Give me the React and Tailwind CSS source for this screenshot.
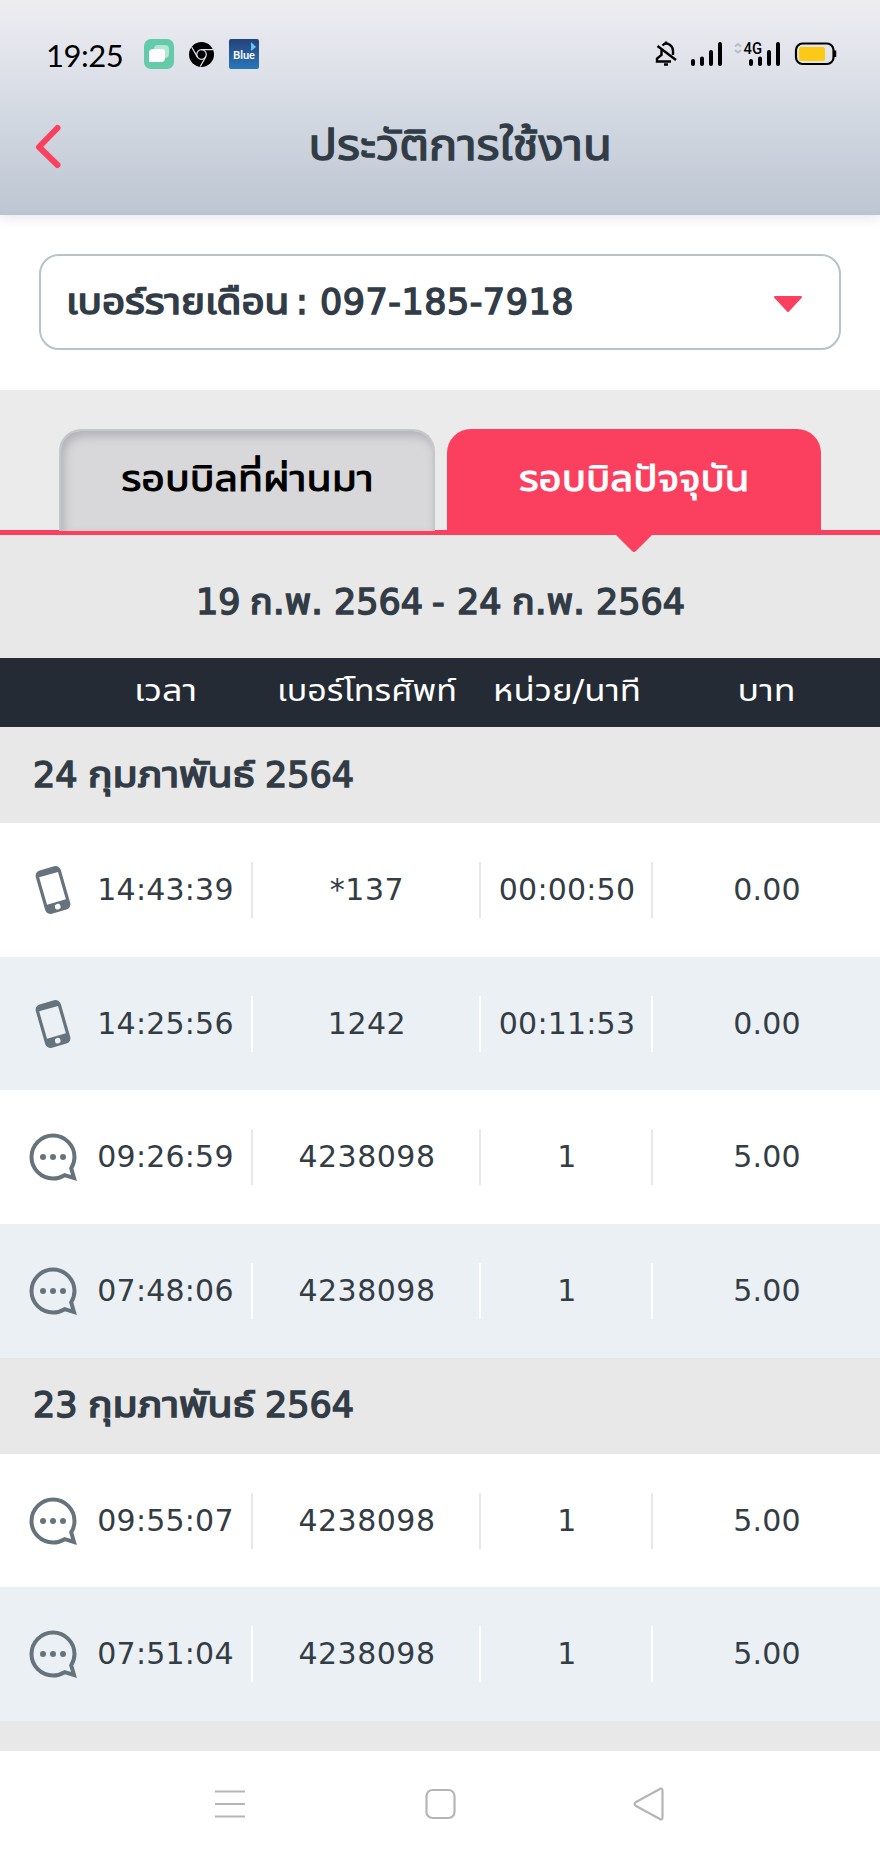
import React, { useState } from "react";

const groups = [
  {
    day: "24",
    rows: [
      { type: "call", time: "14:43:39", number: "*137", units: "00:00:50", baht: "0.00" },
      { type: "call", time: "14:25:56", number: "1242", units: "00:11:53", baht: "0.00" },
      { type: "sms", time: "09:26:59", number: "4238098", units: "1", baht: "5.00" },
      { type: "sms", time: "07:48:06", number: "4238098", units: "1", baht: "5.00" },
    ],
  },
  {
    day: "23",
    rows: [
      { type: "sms", time: "09:55:07", number: "4238098", units: "1", baht: "5.00" },
      { type: "sms", time: "07:51:04", number: "4238098", units: "1", baht: "5.00" },
    ],
  },
  { day: "22", rows: [] },
];

function PhoneIcon({ shaded }) {
  const hole = shaded ? "#ebf0f5" : "white";
  return (
    <svg width="38" height="50" viewBox="0 0 38 50">
      <g transform="rotate(-16 19 25)">
        <rect x="6" y="2.5" width="26" height="45" rx="5.5" fill="#66737d" />
        <rect x="9.2" y="9" width="19.6" height="28.5" fill={hole} />
        <rect x="16.2" y="39.6" width="5.6" height="5.4" rx="2.2" fill={hole} />
      </g>
    </svg>
  );
}

function ChatIcon() {
  return (
    <svg width="48" height="48" viewBox="0 0 48 48" fill="none">
      <path
        d="M35.6 42.2C32.2 44.3 28.1 45.5 24 45.5A21.5 21.5 0 1 1 45.5 24C45.5 28.2 44.3 32 42.2 35.3L45 45Z"
        stroke="#66737d"
        strokeWidth="4"
      />
      <circle cx="14" cy="24" r="3" fill="#66737d" />
      <circle cx="24" cy="24" r="3" fill="#66737d" />
      <circle cx="34" cy="24" r="3" fill="#66737d" />
    </svg>
  );
}

function StatusBar() {
  return (
    <div className="flex h-[108px] items-center justify-between pl-[46px] pr-[43px] text-black">
      <div className="flex items-center">
        <span className="w-[98px] pt-[2px] font-['Lato','Liberation_Sans',sans-serif] text-[31px] leading-none tracking-[-0.5px]">19:25</span>
        <svg width="30" height="30" viewBox="0 0 30 30">
          <rect width="30" height="30" rx="7" fill="#63cba9" />
          <rect x="10" y="6" width="15" height="13" rx="4" fill="#b5e6d5" />
          <path d="M9 10h9q3 0 3 3v6q0 4-4 4H5V14q0-4 4-4z" fill="white" />
        </svg>
        <svg className="ml-[15px]" width="25" height="25" viewBox="0 0 24 24">
          <circle cx="12" cy="12" r="12" fill="black" />
          <g fill="none" stroke="#dfe1e9" strokeWidth="1.2">
            <circle cx="12" cy="12" r="4.6" />
            <path d="M12 7.4H23M8 14.3L2.5 4.8M16 14.3L10.8 23.5" />
          </g>
        </svg>
        <div className="relative ml-[15px] flex h-[30px] w-[30px] items-center justify-center rounded-[2px] bg-gradient-to-b from-[#24437c] to-[#2877b9]">
          <span className="font-['Lato',sans-serif] text-[11px] font-bold leading-none text-white">Blue</span>
          <svg className="absolute right-[3px] top-[3px]" width="5" height="9" viewBox="0 0 5 9">
            <path d="M0 0L5 5L0 9Z" fill="#62c9ee" />
          </svg>
        </div>
      </div>

      <svg width="182" height="28" viewBox="655 40 182 28" fill="none">
        {/* muted bell */}
        <g stroke="black" strokeWidth="2.4">
          <path d="M657.5 46L676 60M661.5 50V55L657 58.5V61.5H671M662.5 45.5Q666 42 670 45Q673 47 673 51V55" />
          <path d="M666 44V41.5M664 64.5H668" />
        </g>
        <g stroke="black" strokeWidth="4" strokeLinecap="round">
          <path d="M693 61V64M702 58.5V64M711 52V64M720 44V64" />
          <path d="M751 61V64M760 58.5V64M769 52V64M778 44V64" />
        </g>
        <path d="M735 46.5L738 44L741 46.5M735 50L738 52.5L741 50" stroke="#b9bbc2" strokeWidth="2" />
        <text x="743.5" y="53.5" fontSize="16" fontWeight="500" fill="black" fontFamily="Roboto" textLength="18.5" lengthAdjust="spacingAndGlyphs">4G</text>
        <rect x="796" y="43.5" width="37.5" height="20.5" rx="6.5" stroke="black" strokeWidth="2.2" />
        <rect x="799" y="47" width="26" height="14" rx="2" fill="#fdc914" />
        <path d="M835 50.5V57" stroke="black" strokeWidth="2.5" />
      </svg>
    </div>
  );
}

function GroupTitle({ day }) {
  return (
    <h2 className="flex h-[96px] items-center whitespace-nowrap bg-[#e8e8e8] pl-[33px] text-[35px] [-webkit-text-stroke:1.5px]">
      <span className="w-[55px]">{day}</span>
      <span className="w-[177px]">
        <span className="inline-block origin-left scale-x-[1.17]">กุมภาพันธ์</span>
      </span>
      <span>2564</span>
    </h2>
  );
}

function Row({ row, shaded }) {
  const cell = shaded
    ? "flex h-[56px] items-center justify-center border-r-2 border-white pl-[2px]"
    : "flex h-[56px] items-center justify-center border-r-2 border-[#e8e8e8] pl-[2px]";
  return (
    <div className={`grid h-[133.7px] grid-cols-[78px_175px_228px_172px_227px] items-center text-[30px] tracking-[0.2px] text-[#343c44] ${shaded ? "bg-[#ebf0f5]" : "bg-white"}`}>
      <div className="flex justify-center pl-[28px]">
        <div className="flex w-[50px] shrink-0 justify-center">
          {row.type === "call" ? <PhoneIcon shaded={shaded} /> : <ChatIcon />}
        </div>
      </div>
      <div className={cell}>{row.time}</div>
      <div className={cell}>
        <span className="tracking-[0.5px]">{row.number}</span>
      </div>
      <div className={cell}>{row.units}</div>
      <div className="pl-[1px] text-center">{row.baht}</div>
    </div>
  );
}

export default function App() {
  const [tab, setTab] = useState("current");

  return (
    <div className="flex h-[1858px] w-[880px] flex-col overflow-hidden bg-white font-['DejaVu_Sans','Noto_Sans_Thai','Noto_Sans',sans-serif] leading-none text-[#323c46]">
      <header className="z-10 h-[215px] shrink-0 bg-[linear-gradient(#ededf0_0%,#e5e6ed_20%,#cfd6df_60%,#bfc7d4_97%,#b9c4ce_100%)] shadow-[0_2px_12px_rgba(190,190,215,0.45)]">
        <StatusBar />
        <div className="grid h-[76px] grid-cols-[100px_1fr_60px] items-center">
          <button className="pl-[35px] pt-[2px]">
            <svg width="28" height="46" viewBox="0 0 28 46" fill="none">
              <path d="M22.5 4L4 23L22.5 41" stroke="#fb3f5f" strokeWidth="6" strokeLinecap="round" strokeLinejoin="round" />
            </svg>
          </button>
          <h1 className="text-center text-[42px] [-webkit-text-stroke:1.3px]">
            <span className="inline-block scale-x-[1.122]">ประวัติการใช้งาน</span>
          </h1>
        </div>
      </header>

      <section className="h-[175px] shrink-0 px-[39px] pt-[39px]">
        <button className="flex h-[96px] w-full items-center justify-between rounded-[20px] border-2 border-[#b9c1c9] pl-[25px] pr-[36px] text-[35px] [-webkit-text-stroke:1.5px]">
          <span className="flex whitespace-nowrap">
            <span className="w-[228px] text-left">
              <span className="inline-block origin-left scale-x-[1.155]">เบอร์รายเดือน</span>
            </span>
            <span className="w-[26px] text-left pl-[2px]">:</span>
            <span className="tracking-[0.5px]">097-185-7918</span>
          </span>
          <svg className="mt-[4px]" width="30" height="17" viewBox="0 0 30 17">
            <path d="M2 1H28L15 15Z" fill="#fb3f5f" stroke="#fb3f5f" strokeWidth="2" strokeLinejoin="round" />
          </svg>
        </button>
      </section>

      <section className="h-[268px] shrink-0 bg-[#e8e8e8]">
        <div className="flex h-[145px] gap-[12px] border-b-[5px] border-[#fb3f5f] bg-[#ebebeb] pl-[59px] pt-[39px]">
          <button
            onClick={() => setTab("past")}
            className="h-[102px] w-[376px] rounded-t-[22px] border-2 border-b-0 border-[#c4c8cb] bg-[#d8d8da] pb-[4px] text-[35px] text-black shadow-[inset_3px_5px_10px_rgba(120,120,130,0.4)] [-webkit-text-stroke:1px]"
          >
            <span className="inline-block scale-x-[1.175]">รอบบิลที่ผ่านมา</span>
          </button>
          <button
            onClick={() => setTab("current")}
            aria-pressed={tab === "current"}
            className="relative h-[102px] w-[374px] rounded-t-[24px] bg-[#fb3f5f] pb-[2px] text-[35px] text-white [-webkit-text-stroke:1px]"
          >
            <span className="inline-block scale-x-[1.15]">รอบบิลปัจจุบัน</span>
            <svg className="absolute left-[168px] top-[105px]" width="38" height="20" viewBox="0 0 38 20">
              <path d="M0 0H38L21 17Q19 19 17 17Z" fill="#fb3f5f" />
            </svg>
          </button>
        </div>
        <div className="flex h-[123px] items-center whitespace-nowrap pl-[196px] pt-[12px] text-[35px] [-webkit-text-stroke:1.5px]">
          <span className="w-[54px]">19</span>
          <span className="w-[84px]">
            <span className="inline-block origin-left scale-x-[1.08]">ก.พ.</span>
          </span>
          <span className="w-[98px]">2564</span>
          <span className="w-[25px]">-</span>
          <span className="w-[55px]">24</span>
          <span className="w-[84px]">
            <span className="inline-block origin-left scale-x-[1.08]">ก.พ.</span>
          </span>
          <span>2564</span>
        </div>
      </section>

      <div className="grid h-[69px] shrink-0 grid-cols-[78px_175px_228px_172px_227px] items-center bg-[#242b35] pb-[4px] text-center text-[30px] text-white">
        <div />
        <div className="scale-x-[1.2]">เวลา</div>
        <div className="scale-x-[1.135]">เบอร์โทรศัพท์</div>
        <div className="scale-x-[1.16]">หน่วย/นาที</div>
        <div className="scale-x-[1.19]">บาท</div>
      </div>

      <main className="h-[1024px] shrink-0 overflow-hidden">
        {groups.map((g) => (
          <section key={g.day}>
            <GroupTitle day={g.day} />
            {g.rows.map((row, i) => (
              <Row key={row.time} row={row} shaded={i % 2 === 1} />
            ))}
          </section>
        ))}
      </main>

      <nav className="flex h-[107px] shrink-0 items-center justify-between bg-white pb-[1px] pl-[213px] pr-[214px]">
        <svg width="34" height="34" viewBox="0 0 34 34" stroke="#b5b5b5" strokeWidth="2.2">
          <path d="M2 4.5H32M2 17H32M2 29.5H32" />
        </svg>
        <svg width="34" height="34" viewBox="0 0 34 34" fill="none" stroke="#b5b5b5" strokeWidth="2.2">
          <rect x="3.5" y="3" width="28" height="28" rx="6" />
        </svg>
        <svg width="34" height="34" viewBox="0 0 34 34" fill="none" stroke="#b5b5b5" strokeWidth="2.2" strokeLinejoin="round">
          <path d="M27 2.5Q30.5 0 30.5 4V30Q30.5 34 27 31.5L4 19Q1 17 4 15Z" />
        </svg>
      </nav>
    </div>
  );
}
